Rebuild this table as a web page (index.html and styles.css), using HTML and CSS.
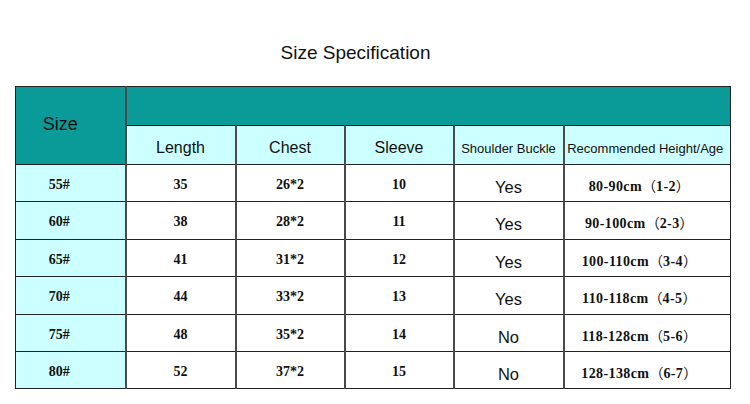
FILE: index.html
```html
<!DOCTYPE html>
<html>
<head>
<meta charset="utf-8">
<link rel="stylesheet" href="styles.css">
</head>
<body>
<div class="page">
  <h1 class="title">Size Specification</h1>
  <table class="spec">
    <colgroup>
      <col class="c1"><col class="c2"><col class="c3"><col class="c4"><col class="c5"><col class="c6">
    </colgroup>
    <tr class="r-top">
      <th class="size-head" rowspan="2">Size</th>
      <th class="band" colspan="5"></th>
    </tr>
    <tr class="r-sub">
      <th class="sub big">Length</th>
      <th class="sub big">Chest</th>
      <th class="sub big">Sleeve</th>
      <th class="sub small">Shoulder Buckle</th>
      <th class="sub small rec">Recommended Height/Age</th>
    </tr>
    <tr class="r37"><td class="sz">55#</td><td class="num">35</td><td class="num">26*2</td><td class="num">10</td><td class="yn">Yes</td><td class="ha">80-90cm<span class="fw">（</span>1-2<span class="fw">）</span></td></tr>
    <tr class="r38"><td class="sz">60#</td><td class="num">38</td><td class="num">28*2</td><td class="num">11</td><td class="yn">Yes</td><td class="ha">90-100cm<span class="fw">（</span>2-3<span class="fw">）</span></td></tr>
    <tr class="r37"><td class="sz">65#</td><td class="num">41</td><td class="num">31*2</td><td class="num">12</td><td class="yn">Yes</td><td class="ha">100-110cm<span class="fw">（</span>3-4<span class="fw">）</span></td></tr>
    <tr class="r38"><td class="sz">70#</td><td class="num">44</td><td class="num">33*2</td><td class="num">13</td><td class="yn">Yes</td><td class="ha">110-118cm<span class="fw">（</span>4-5<span class="fw">）</span></td></tr>
    <tr class="r37"><td class="sz">75#</td><td class="num">48</td><td class="num">35*2</td><td class="num">14</td><td class="yn">No</td><td class="ha">118-128cm<span class="fw">（</span>5-6<span class="fw">）</span></td></tr>
    <tr class="r37"><td class="sz">80#</td><td class="num">52</td><td class="num">37*2</td><td class="num">15</td><td class="yn">No</td><td class="ha">128-138cm<span class="fw">（</span>6-7<span class="fw">）</span></td></tr>
  </table>
</div>
</body>
</html>
```
FILE: styles.css
```css
html, body {
  margin: 0;
  padding: 0;
  background: #ffffff;
}
.page {
  width: 750px;
  height: 404px;
  padding: 0 0 0 15px;
  box-sizing: border-box;
}
.title {
  margin: 0;
  width: 715px;
  box-sizing: border-box;
  padding: 42px 34px 0 0;
  height: 86px;
  text-align: center;
  font-family: "Liberation Sans", Arial, sans-serif;
  font-weight: normal;
  font-size: 19px;
  line-height: 22px;
  color: #111;
}
.spec {
  border-collapse: collapse;
  table-layout: fixed;
  width: 715px;
  border: 1px solid #222;
}
.c1 { width: 110px; }
.c2 { width: 110px; }
.c3 { width: 109px; }
.c4 { width: 109px; }
.c5 { width: 110px; }
.c6 { width: 167px; }
.spec th, .spec td {
  padding: 0;
  text-align: center;
  border-top: 1px solid #222;
  border-bottom: 1px solid #222;
  border-left: 2px solid #4a4a4a;
  border-right: 2px solid #4a4a4a;
  color: #111;
}
.spec tr > :first-child { border-left: 1px solid #222; }
.spec tr > :last-child { border-right: 1px solid #222; }
.r-top { height: 39px; }
.r-sub { height: 39px; }
.r37 { height: 37px; }
.r38 { height: 38px; }
.size-head {
  background: #0a9a97;
  font-family: "Liberation Sans", Arial, sans-serif;
  font-weight: normal;
  font-size: 18px;
  padding: 0 20px 3px 0 !important;
}
.band {
  background: #0a9a97;
}
.sub {
  background: #ccffff;
  font-family: "Liberation Sans", Arial, sans-serif;
  font-weight: normal;
  padding-top: 6px !important;
}
.sub.big { font-size: 16px; }
.sub.small { font-size: 13px; }
.sub.rec { padding-right: 4px !important; }
.sz {
  background: #ccffff;
  padding-right: 22px !important;
}
.sz, .num, .ha {
  font-family: "Liberation Serif", "Times New Roman", serif;
  font-weight: bold;
  font-size: 14px;
  padding-top: 3px !important;
}
.yn {
  font-family: "Liberation Sans", Arial, sans-serif;
  font-size: 16.5px;
  padding-top: 8px !important;
}
.ha {
  padding-right: 16px !important;
  letter-spacing: 0.4px;
}
.fw {
  font-family: "Noto Sans CJK SC", sans-serif;
  font-weight: normal;
  font-size: 14px;
  letter-spacing: 0;
}
```
